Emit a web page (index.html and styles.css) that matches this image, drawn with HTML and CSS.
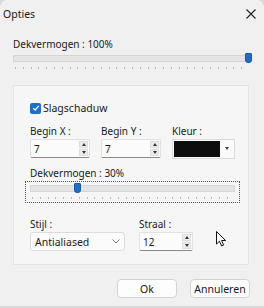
FILE: index.html
```html
<!DOCTYPE html>
<html lang="nl">
<head>
    <meta charset="UTF-8">
    <title>Opties</title>
    <link rel="stylesheet" href="styles.css">
</head>
<body>
    <div class="window">
        <div class="titlebar">
            <span class="title">Opties</span>
            <svg class="close" width="10" height="10" viewBox="0 0 10 10">
                <path d="M0.5 0.5 L9.5 9.5 M9.5 0.5 L0.5 9.5" stroke="#222" stroke-width="1.1"/>
            </svg>
        </div>

        <div class="content">
            <div class="label">Dekvermogen : 100%</div>
            <div class="slider">
                <div class="track"></div>
                <div class="thumb" style="left: 232px"></div>
                <div class="ticks"></div>
            </div>

            <div class="group">
                <label class="check">
                    <span class="box">
                        <svg width="8" height="8" viewBox="0 0 8 8"><path d="M1.2 4.2 L3.2 6 L6.8 1.8" fill="none" stroke="#fff" stroke-width="1.3"/></svg>
                    </span>
                    Slagschaduw
                </label>

                <div class="fields">
                    <div class="field">
                        <div class="label">Begin X :</div>
                        <div class="spin w60">
                            <span class="val">7</span>
                            <span class="arrows"><i class="up"></i><i class="down"></i></span>
                        </div>
                    </div>
                    <div class="field">
                        <div class="label">Begin Y :</div>
                        <div class="spin w60">
                            <span class="val">7</span>
                            <span class="arrows"><i class="up"></i><i class="down"></i></span>
                        </div>
                    </div>
                    <div class="field">
                        <div class="label">Kleur :</div>
                        <div class="color">
                            <span class="swatch"></span>
                            <span class="drop"><i class="down"></i></span>
                        </div>
                    </div>
                </div>

                <div class="label sub">Dekvermogen : 30%</div>
                <div class="focus">
                    <div class="slider small">
                        <div class="track"></div>
                        <div class="thumb" style="left: 44px"></div>
                        <div class="ticks"></div>
                    </div>
                </div>

                <div class="fields bottom">
                    <div class="field">
                        <div class="label">Stijl :</div>
                        <div class="combo">
                            <span>Antialiased</span>
                            <svg width="8" height="5" viewBox="0 0 8 5"><path d="M0.5 0.5 L4 4 L7.5 0.5" fill="none" stroke="#777" stroke-width="1"/></svg>
                        </div>
                    </div>
                    <div class="field">
                        <div class="label">Straal :</div>
                        <div class="spin w54">
                            <span class="val">12</span>
                            <span class="arrows"><i class="up"></i><i class="down"></i></span>
                        </div>
                    </div>
                </div>
            </div>
        </div>

        <div class="buttons">
            <button class="btn">Ok</button>
            <button class="btn">Annuleren</button>
        </div>

        <svg class="cursor" width="12" height="17" viewBox="0 0 12 17">
            <path d="M0.5 0.5 L0.5 13 L3.5 10.2 L5.6 15 L7.6 14.1 L5.6 9.5 L9.6 9.5 Z" fill="#fff" stroke="#111" stroke-width="1"/>
        </svg>
    </div>
</body>
</html>
```

FILE: styles.css
```css
body {
    margin: 0;
    padding: 0;
    background-color: #d9d9d9;
    font-family: 'Noto Sans', 'Open Sans', sans-serif;
    font-size: 10px;
    color: #1a1a1a;
}

.window {
    width: 264px;
    height: 306px;
    background-color: #f0f0f0;
    border-radius: 7px 7px 0 0;
    position: relative;
    overflow: hidden;
}

.titlebar {
    height: 28px;
    display: flex;
    align-items: center;
    justify-content: space-between;
    padding: 0 8px 0 3px;
}

.title {
    font-size: 10.5px;
}

.content {
    padding: 8px 15px 0 13px;
}

.label {
    line-height: 16px;
    white-space: nowrap;
}

.slider {
    position: relative;
    height: 22px;
    margin-top: -1px;
}

.track {
    position: absolute;
    left: 0;
    right: 0;
    top: 4px;
    height: 5px;
    background-color: #e4e4e4;
    border: 1px solid #d6d6d6;
}

.thumb {
    position: absolute;
    top: 2px;
    width: 5px;
    height: 8px;
    background-color: #1f6fc9;
    border: 1px solid #185aa6;
    border-radius: 1px 1px 3px 3px;
}

.ticks {
    position: absolute;
    left: 2px;
    right: 0;
    top: 16px;
    height: 2px;
    background: repeating-linear-gradient(to right, #b9b9b9 0 1px, transparent 1px 7.8px);
}

.group {
    margin-top: 12px;
    height: 164px;
    background-color: #f6f6f6;
    border: 1px solid #e4e4e4;
    padding: 14px 0 0 16px;
}

.check {
    display: flex;
    align-items: center;
    gap: 2px;
    line-height: 16px;
    font-size: 10.5px;
}

.box {
    width: 11px;
    height: 11px;
    background-color: #1f6fc9;
    border-radius: 2px;
    display: flex;
    align-items: center;
    justify-content: center;
}

.fields {
    display: flex;
    gap: 11px;
    margin-top: 7px;
}

.fields.bottom {
    gap: 14px;
    margin-top: 13px;
}

.spin {
    height: 19px;
    display: flex;
    align-items: center;
    justify-content: space-between;
    background-color: #fbfbfb;
    border: 1px solid #e2e2e2;
    border-bottom-color: #8a8a8a;
    border-radius: 2px;
    box-sizing: border-box;
    padding-left: 3px;
}

.w60 {
    width: 60px;
}

.w54 {
    width: 54px;
}

.arrows {
    display: flex;
    flex-direction: column;
    gap: 1px;
    margin-right: 1px;
}

.arrows i {
    display: block;
    width: 9px;
    height: 7px;
    background-color: #ececec;
    border: 1px solid #dedede;
    box-sizing: border-box;
    position: relative;
}

.up::after, .down::after {
    content: "";
    position: absolute;
    left: 2px;
    border-left: 2px solid transparent;
    border-right: 2px solid transparent;
}

.up::after {
    top: 1px;
    border-bottom: 3px solid #333;
}

.down::after {
    top: 1px;
    border-top: 3px solid #333;
}

.color {
    width: 63px;
    height: 20px;
    box-sizing: border-box;
    border: 1px solid #dadada;
    background-color: #fafafa;
    display: flex;
    align-items: center;
    padding: 1px;
    gap: 2px;
}

.swatch {
    width: 46px;
    height: 16px;
    background-color: #0d0d0d;
}

.drop {
    flex: 1;
    height: 16px;
    position: relative;
}

.drop i {
    position: absolute;
    left: 3px;
    top: 6px;
}

.drop .down::after {
    left: 0;
    top: 0;
    border-top-color: #444;
}

.sub {
    margin-top: 6px;
}

.focus {
    margin-left: -5px;
    width: 215px;
    height: 22px;
    border: 1px dotted #555;
    padding: 0 4px;
    box-sizing: border-box;
}

.slider.small {
    margin-top: 0;
}

.slider.small .track {
    top: 3px;
}

.slider.small .thumb {
    top: 1px;
}

.slider.small .ticks {
    top: 15px;
}

.combo {
    width: 95px;
    height: 19px;
    box-sizing: border-box;
    background-color: #fbfbfb;
    border: 1px solid #dcdcdc;
    border-radius: 3px;
    display: flex;
    align-items: center;
    justify-content: space-between;
    padding: 0 4px;
    font-size: 10.5px;
}

.buttons {
    display: flex;
    justify-content: flex-end;
    gap: 13px;
    padding: 14px 14px 0 0;
}

.btn {
    width: 60px;
    height: 19px;
    font-family: inherit;
    font-size: 10.5px;
    color: #1a1a1a;
    background-color: #fdfdfd;
    border: 1px solid #d3d3d3;
    border-radius: 4px;
    padding: 0;
    line-height: 16px;
}

.cursor {
    position: absolute;
    left: 216px;
    top: 231px;
}
```
